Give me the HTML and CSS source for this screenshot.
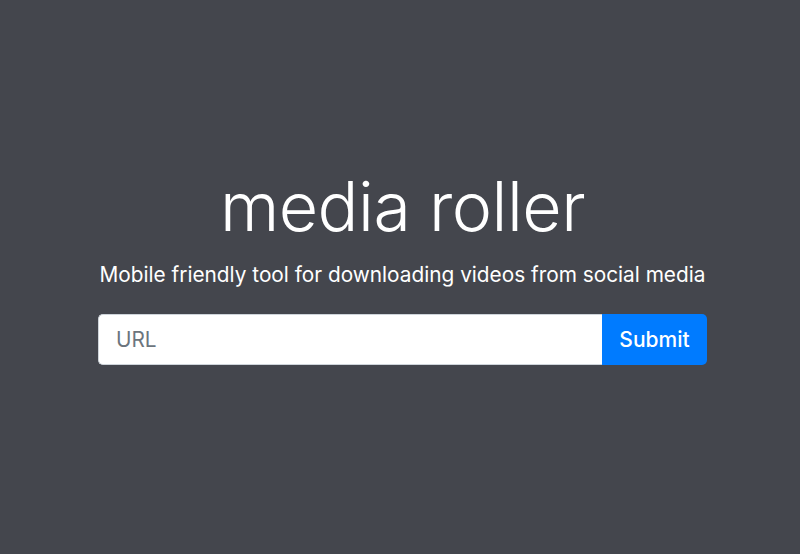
FILE: index.html
```html
<!DOCTYPE html>
<html>
<head>
<meta charset="utf-8">
<link rel="stylesheet" href="styles.css">
</head>
<body>
<main class="page">
  <h1 class="title">media roller</h1>
  <p class="lead">Mobile friendly tool for downloading videos from social media</p>
  <form class="search">
    <input class="url" type="text" placeholder="URL">
    <button class="submit" type="button">Submit</button>
  </form>
</main>
</body>
</html>
```
FILE: styles.css
```css
html, body {
  margin: 0;
  height: 100%;
  background: #44464d;
}
body {
  font-family: Inter, "Liberation Sans", sans-serif;
  color: #fff;
}
.page {
  height: 554px;
  display: flex;
  flex-direction: column;
  align-items: center;
  box-sizing: border-box;
  padding-top: 164px;
  padding-left: 5px;
}
.title {
  margin: 0;
  font-size: 68px;
  font-weight: 300;
  line-height: 84px;
  letter-spacing: -0.5px;
}
.lead {
  margin: 12px 0 0;
  font-size: 20.8px;
  font-weight: 400;
  line-height: 30px;
}
.search {
  margin-top: 24px;
  display: flex;
  width: 609px;
  height: 51px;
}
.url {
  flex: 1;
  box-sizing: border-box;
  height: 51px;
  margin: 0;
  padding: 0 17px;
  border: 1px solid #ced4da;
  border-right: none;
  border-radius: 5px 0 0 5px;
  font-family: inherit;
  font-size: 20.8px;
  color: #495057;
  background: #fff;
  outline: none;
}
.url::placeholder {
  color: #6c757d;
}
.submit {
  width: 105px;
  height: 51px;
  margin: 0;
  border: none;
  border-radius: 0 5px 5px 0;
  background: #007bff;
  color: #fff;
  font-family: inherit;
  font-size: 21px;
  font-weight: 450;
  padding: 0;
}
```
